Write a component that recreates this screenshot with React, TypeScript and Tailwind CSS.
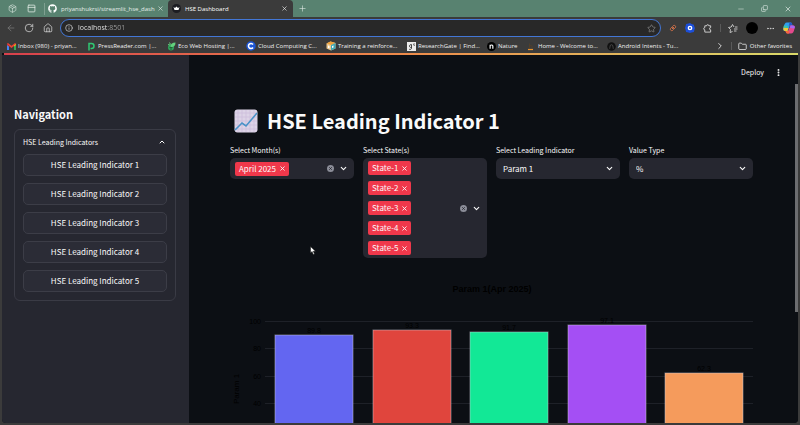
import { useState } from "react";
import type { ReactNode } from "react";
import {
  ArrowLeft,
  ChevronDown,
  ChevronRight,
  ChevronUp,
  Copy,
  EllipsisVertical,
  Ellipsis,
  Folder,
  House,
  Info,
  Minus,
  Package,
  PanelTop,
  Plus,
  RotateCw,
  Star,
  X,
} from "lucide-react";
import { FaGithub } from "react-icons/fa";

function GmailIcon() {
  return (
    <svg viewBox="0 0 18 14" className="w-[9px] h-[7px] shrink-0" aria-hidden="true">
      <path d="M0 2v12h4V5z" fill="#4285f4" />
      <path d="M18 2v12h-4V5z" fill="#34a853" />
      <path d="M0 3V1.500l2-1.500 7 5.500L16 0l2 1.500V3l-9 7z" fill="#ea4335" />
      <path d="M0 2l4 3v2L0 4z" fill="#c5221f" />
      <path d="M18 2l-4 3v2l4-3z" fill="#fbbc04" />
    </svg>
  );
}

function PressReaderIcon() {
  return (
    <svg viewBox="0 0 16 18" className="w-2 h-[9px] shrink-0" aria-hidden="true">
      <path d="M4 17V3h5a4.500 4.500 0 0 1 0 10H7" fill="none" stroke="#2fc873" strokeWidth="3" />
    </svg>
  );
}

function EcoIcon() {
  return (
    <svg viewBox="0 0 18 18" className="w-[9px] h-[9px] shrink-0" aria-hidden="true">
      <circle cx="8" cy="11" r="6" fill="#2fa45a" />
      <path d="M7 9c0-5 4-8 10-8 0 6-3 9-8 9z" fill="#63d07d" />
      <path d="M2 5l4 1M5 1l2 4" stroke="#63d07d" strokeWidth="2" />
      <path d="M5 11h6M6 14h4" stroke="#21462d" strokeWidth="1.500" />
    </svg>
  );
}

function CloudCIcon() {
  return (
    <svg viewBox="0 0 20 20" className="w-[10px] h-[10px] shrink-0" aria-hidden="true">
      <circle cx="10" cy="10" r="9.500" fill="#1c56d6" />
      <path d="M14 7a5 5 0 1 0 0 6" fill="none" stroke="#fff" strokeWidth="3.200" />
    </svg>
  );
}

function CubeIcon() {
  return (
    <svg viewBox="0 0 20 20" className="w-[10px] h-[10px] shrink-0" aria-hidden="true">
      <path d="M1 5l8-4 10 3v11l-9 4-9-4z" fill="#e9c48b" />
      <path d="M1 5l8-4 10 3-9 4z" fill="#f0a13a" />
      <path d="M10 8l9-4v11l-9 4z" fill="#3fa7b5" />
      <path d="M4 9l3 1v5l-3-1zM12 10l3-1v4l-3 1z" fill="#fff" />
    </svg>
  );
}

function ResearchGateIcon() {
  return (
    <svg viewBox="0 0 18 18" className="w-[9px] h-[9px] shrink-0" aria-hidden="true">
      <rect width="18" height="18" fill="#ececec" />
      <path d="M10 6a3 3 0 1 0-1 5M9 6v7a3 3 0 0 1-5 1" fill="none" stroke="#333" strokeWidth="1.800" />
      <path d="M15 3a2 2 0 1 0 0 4V5" fill="none" stroke="#333" strokeWidth="1.300" />
    </svg>
  );
}

function NatureIcon() {
  return (
    <svg viewBox="0 0 20 20" className="w-[9px] h-[9px] shrink-0" aria-hidden="true">
      <circle cx="10" cy="10" r="10" fill="#000" />
      <path d="M7 15V6M7 8c2-2 6-2 6 1v6" fill="none" stroke="#fff" strokeWidth="2.600" />
    </svg>
  );
}

function HomeSiteIcon() {
  return (
    <svg viewBox="0 0 16 18" className="w-2 h-[9px] shrink-0" aria-hidden="true">
      <path d="M5 3v9M5 8c2-2 5-1 5 1v3" fill="none" stroke="#5a4326" strokeWidth="1.500" />
      <path d="M2 15h10" stroke="#e8912b" strokeWidth="2.500" />
    </svg>
  );
}

function AndroidSiteIcon() {
  return (
    <svg viewBox="0 0 20 20" className="w-[9px] h-[9px] shrink-0" aria-hidden="true">
      <circle cx="10" cy="10" r="9.500" fill="#111" />
      <path d="M6 15c0-3 1-4 1-6a3 3 0 0 1 6 0c0 2 1 3 1 6" fill="none" stroke="#4a4a4a" strokeWidth="2" />
    </svg>
  );
}

function CrownIcon() {
  return (
    <svg viewBox="0 0 18 18" className="w-[9px] h-[9px] shrink-0" aria-hidden="true">
      <circle cx="9" cy="9" r="9" fill="#1c1c22" />
      <path d="M3 6l3 2 3-3 3 3 3-2-2 6H5z" fill="#fff" />
    </svg>
  );
}

function CopilotIcon() {
  return (
    <svg viewBox="0 0 24 24" className="w-3 h-3 shrink-0" aria-hidden="true">
      <path d="M8 1h7c3 0 3 3 4 6h-5L9 18H4c-4 0-4-4-3-7C2 5 4 1 8 1z" fill="#2f9df0" />
      <path d="M13 1h2c3 0 3 3 4 6h-5c-2 0-3 2-3 4z" fill="#2456c8" />
      <path d="M1 11c-1 4 0 7 3 7h5l2-6z" fill="#f0c83a" />
      <path d="M1 11l1-4 8 1-1 4z" fill="#3ac7a0" />
      <path d="M16 23H9c-3 0-3-2-4-5h5l5-11h5c4 0 4 3 3 6-1 6-3 10-7 10z" fill="#e5498c" />
      <path d="M15 7h5c4 0 4 3 3 6l-9-1z" fill="#a865f0" />
      <path d="M5 18h5c2 0 3-2 3-4l-1 9H9c-3 0-3-2-4-5z" fill="#f46a3a" />
    </svg>
  );
}

function ExtensionsIcon() {
  return (
    <svg viewBox="0 0 20 20" className="w-[9px] h-[9px]" fill="none" stroke="currentColor" strokeWidth="2" aria-hidden="true">
      <path d="M4 4h4a2.500 2.500 0 0 1 5 0h4v4a2.500 2.500 0 0 0 0 5v5H4v-5a2.500 2.500 0 0 1 0-5z" />
    </svg>
  );
}

function ClearIcon() {
  return (
    <svg viewBox="0 0 14 14" className="w-[7px] h-[7px]" aria-hidden="true">
      <circle cx="7" cy="7" r="7" fill="#8b8d98" />
      <path d="M4.500 4.500l5 5M9.500 4.500l-5 5" stroke="#262730" strokeWidth="1.800" />
    </svg>
  );
}

function ChartEmoji() {
  return (
    <svg viewBox="0 0 24 24" className="w-6 h-6 shrink-0" role="img" aria-label="Chart increasing">
      <rect x="0.500" y="0.500" width="23" height="23" rx="3" fill="#dcd3e6" />
      <path
        d="M4 1v22M8 1v22M12 1v22M16 1v22M20 1v22M1 4h22M1 8h22M1 12h22M1 16h22M1 20h22"
        stroke="#cdbedc"
        strokeWidth="0.800"
      />
      <path d="M1 21l7-7 4 3L23 4" fill="none" stroke="#4a92c8" strokeWidth="1.600" />
    </svg>
  );
}

type Bookmark = { label: string; icon: ReactNode; width: string };

const bookmarks: Bookmark[] = [
  { label: "Inbox (980) - priyan...", icon: <GmailIcon />, width: "w-20" },
  { label: "PressReader.com |...", icon: <PressReaderIcon />, width: "w-20" },
  { label: "Eco Web Hosting |...", icon: <EcoIcon />, width: "w-20" },
  { label: "Cloud Computing C...", icon: <CloudCIcon />, width: "w-20" },
  { label: "Training a reinforce...", icon: <CubeIcon />, width: "w-20" },
  { label: "ResearchGate | Find...", icon: <ResearchGateIcon />, width: "w-20" },
  { label: "Nature", icon: <NatureIcon />, width: "w-10" },
  { label: "Home - Welcome to...", icon: <HomeSiteIcon />, width: "w-20" },
  { label: "Android Intents - Tu...", icon: <AndroidSiteIcon />, width: "w-20" },
];

function TabStrip() {
  return (
    <div className="flex h-[17px] shrink-0 items-stretch bg-[#588270] text-[#e6efea]">
      <div className="flex w-[168px] items-center pl-2">
        <button aria-label="Workspaces"><Package size={9} strokeWidth={1.5} /></button>
        <button aria-label="Tab actions" className="ml-[10px]"><PanelTop size={9} strokeWidth={2} /></button>
        <span className="ml-2 h-3 w-px bg-[#7fa091]" />
        <FaGithub size={9} className="ml-[3px] shrink-0 text-white" />
        <span className="ml-[4px] flex-1 whitespace-nowrap">priyanshukrsi/streamlit_hse_dash</span>
        <button aria-label="Close tab" className="mr-1"><X size={7} /></button>
      </div>
      <div className="flex w-[125px] items-center rounded-t bg-[#3b3b3b] pl-1 pr-[5px] text-white">
        <CrownIcon />
        <span className="ml-1 flex-1">HSE Dashboard</span>
        <button aria-label="Close tab"><X size={7} /></button>
      </div>
      <button aria-label="New tab" className="ml-[5px]"><Plus size={9} strokeWidth={1.5} /></button>
      <div className="ml-auto flex items-center gap-4 pr-2">
        <button aria-label="Minimize"><Minus size={8} strokeWidth={1.5} /></button>
        <button aria-label="Restore"><Copy size={7} strokeWidth={2} className="-scale-x-100 rotate-180" /></button>
        <button aria-label="Close window"><X size={8} strokeWidth={2} /></button>
      </div>
    </div>
  );
}

function Toolbar() {
  const [url, setUrl] = useState("localhost:8501");
  return (
    <div className="flex h-[22px] shrink-0 items-center pl-[6px] pr-[5px] text-[#d8d8d8]">
      <button aria-label="Back" className="text-[#7a7a7a]"><ArrowLeft size={10} strokeWidth={1.800} /></button>
      <button aria-label="Refresh" className="ml-2"><RotateCw size={10} strokeWidth={1.800} /></button>
      <button aria-label="Home" className="ml-[9px]"><House size={10} strokeWidth={1.800} /></button>
      <label className="ml-[7px] flex h-[18px] flex-1 items-center rounded-full border border-[#4377d6] bg-[#282828] px-1">
        <Info size={8} strokeWidth={2} />
        <input
          aria-label="Address"
          value={url}
          onChange={(e) => setUrl(e.target.value)}
          className="ml-[5px] min-w-0 flex-1 bg-[linear-gradient(90deg,#f2f2f2_29px,#a0a0a0_29px)] bg-clip-text text-[7px] text-transparent outline-none"
        />
        <Star size={9} strokeWidth={1.500} className="text-[#a0a0a0]" />
      </label>
      <div className="flex w-[134px] items-center justify-between pl-2">
        <svg viewBox="0 0 16 16" className="h-2 w-2" aria-hidden="true">
          <path d="M9 3a3 3 0 0 1 4 4l-2 2-4-4zM7 13a3 3 0 0 1-4-4l2-2 4 4zM5 7l6 2" fill="none" stroke="#d0714a" strokeWidth="2" />
        </svg>
        <svg viewBox="0 0 18 18" className="h-[10px] w-[10px]" aria-hidden="true">
          <path d="M9 0l3 2 4 1 1 4 1 2-1 3-1 4-4 1-3 1-3-1-4-1-1-4-1-3 1-3 1-4 4-1z" fill="#1d4fd8" />
          <circle cx="9" cy="9" r="3" fill="#1d4fd8" stroke="#fff" strokeWidth="2.500" />
        </svg>
        <button aria-label="Extensions"><ExtensionsIcon /></button>
        <span className="h-2 w-px bg-[#5a5a5a]" />
        <button aria-label="Favorites">
          <svg viewBox="0 0 20 18" className="h-[9px] w-[10px]" fill="none" stroke="currentColor" strokeWidth="1.700">
            <path d="M12 6L9 1 6.500 6 1 7l4 4-1 6 5-2M14 6h5M12 10h7M12 14h5" />
          </svg>
        </button>
        <button aria-label="Profile" className="h-3 w-3 rounded-full bg-black" />
        <button aria-label="Settings and more"><Ellipsis size={9} /></button>
        <button aria-label="Copilot"><CopilotIcon /></button>
      </div>
    </div>
  );
}

function BookmarksBar() {
  return (
    <nav aria-label="Favorites bar" className="flex h-[14px] shrink-0 items-center pl-[6px] pr-2 text-[#f0f0f0]">
      {bookmarks.map((b) => (
        <a key={b.label} href="#" className={`flex shrink-0 items-center gap-[2px] whitespace-nowrap ${b.width}`}>
          <span className="flex w-[10px] shrink-0 justify-center">{b.icon}</span>
          {b.label}
        </a>
      ))}
      <div className="ml-auto flex items-center">
        <button aria-label="More favorites"><ChevronRight size={10} /></button>
        <span className="mx-[6px] h-2 w-px bg-[#5a5a5a]" />
        <a href="#" className="flex items-center gap-[3px] whitespace-nowrap"><Folder size={9} strokeWidth={2} />Other favorites</a>
      </div>
    </nav>
  );
}

function Sidebar() {
  const [open, setOpen] = useState(true);
  return (
    <aside className="w-[187px] shrink-0 bg-[#262730] pl-3 pr-[13px] pt-[50px]">
      <h2 className="text-[11px] font-bold leading-[18px]">Navigation</h2>
      <section className="mt-[6px] rounded-md border border-[#3a3b45] px-2 pb-2">
        <button
          onClick={() => setOpen(!open)}
          aria-expanded={open}
          className="flex h-6 w-full items-center justify-between text-[7px]"
        >
          HSE Leading Indicators
          <ChevronUp size={8} strokeWidth={3} className="mr-[1px]" />
        </button>
        {open && (
          <div className="flex flex-col gap-[7px]">
            {[1, 2, 3, 4, 5].map((n) => (
              <button key={n} className="h-[22px] rounded-[5px] border border-[#3c3d47] bg-[#2b2c36] text-[8px] leading-[12px]">
                HSE Leading Indicator {n}
              </button>
            ))}
          </div>
        )}
      </section>
    </aside>
  );
}

function MultiSelect({ label, initial }: { label: string; initial: string[] }) {
  const [values, setValues] = useState(initial);
  return (
    <fieldset className="min-w-0">
      <legend className="text-[7px] leading-[10px]">{label}</legend>
      <div className="mt-[3px] flex items-center rounded-[5px] bg-[#262730] pl-[5px] pr-[6px]">
        <div className="flex min-h-[21px] flex-1 flex-col items-start justify-center gap-[6px] py-[3px]">
          {values.map((v) => (
            <span key={v} className="flex h-[14px] items-center gap-[3px] rounded-[2px] bg-[#f0384b] pl-1 pr-[3px] text-[8px] leading-[14px]">
              {v}
              <button aria-label={`Remove ${v}`} onClick={() => setValues(values.filter((o) => o !== v))}>
                <X size={7} strokeWidth={3} />
              </button>
            </span>
          ))}
        </div>
        <button aria-label="Clear all" onClick={() => setValues([])}>
          <ClearIcon />
        </button>
        <button aria-label={`Open ${label}`} className="ml-[5px]">
          <ChevronDown size={9} strokeWidth={3} />
        </button>
      </div>
    </fieldset>
  );
}

function SelectBox({ label, options }: { label: string; options: string[] }) {
  return (
    <label className="block min-w-0">
      <span className="block text-[7px] leading-[10px]">{label}</span>
      <span className="mt-[3px] grid items-center">
        <select className="col-start-1 row-start-1 h-[21px] w-full appearance-none rounded-[5px] bg-[#262730] px-[7px] text-[8px] leading-[12px] outline-none">
          {options.map((o) => (
            <option key={o}>{o}</option>
          ))}
        </select>
        <ChevronDown size={9} strokeWidth={3} className="pointer-events-none col-start-1 row-start-1 mr-[6px] justify-self-end" />
      </span>
    </label>
  );
}

const bars = [
  { value: "89.8", top: 66, color: "#6366f1" },
  { value: "93.3", top: 61, color: "#e0453d" },
  { value: "91.7", top: 63, color: "#12e896" },
  { value: "97.1", top: 56, color: "#a44ff4" },
  { value: "62.3", top: 104, color: "#f59b5c" },
];

const ticks = [
  { label: "100", y: 52 },
  { label: "80", y: 79 },
  { label: "60", y: 107 },
  { label: "40", y: 134 },
];

function BarChart() {
  return (
    <svg
      viewBox="0 0 523 200"
      className="mt-[12px] block w-full font-['Liberation_Sans',Arial,sans-serif]"
      role="img"
      aria-label="Param 1 by state"
    >
      <text x="262" y="22" textAnchor="middle" fontSize="9" fontWeight="bold" fill="#000">Param 1(Apr 2025)</text>
      {ticks.map((t) => (
        <g key={t.label}>
          <rect x="35" y={t.y - 1} width="488" height="1" fill="#1e2128" />
          <text x="31" y={t.y + 2} textAnchor="end" fontSize="7" fill="#000">{t.label}</text>
        </g>
      ))}
      <text transform="translate(9 119) rotate(-90)" textAnchor="middle" y="0" fontSize="8" fill="#000">Param 1</text>
      {bars.map((b, i) => {
        const x = 45 + Math.round(i * 97.6);
        return (
          <g key={b.value}>
            <rect x={x} y={b.top - 1} width="78" height={190 - b.top} fill={b.color} stroke="#c9c9d6" strokeOpacity="0.500" strokeWidth="1" />
            <text x={x + 39} y={b.top - 3} textAnchor="middle" fontSize="7" fill="#000">{b.value}</text>
          </g>
        );
      })}
    </svg>
  );
}

function Dashboard() {
  return (
    <main className="flex min-w-0 flex-1 flex-col overflow-hidden bg-[#0c0f14]">
      <header className="flex h-[34px] shrink-0 items-center justify-end gap-[10px] pr-[15px] text-[7px]">
        <button>Deploy</button>
        <button aria-label="Main menu"><EllipsisVertical size={9} strokeWidth={3} /></button>
      </header>
      <div className="pl-[41px] pr-[45px]">
        <h1 className="mt-[16px] flex h-8 items-center gap-[9px] pl-1 text-[20px] font-bold leading-8">
          <ChartEmoji />
          HSE Leading Indicator 1
        </h1>
        <div className="mt-[8px] grid grid-cols-4 items-start gap-[9px]">
          <MultiSelect label="Select Month(s)" initial={["April 2025"]} />
          <MultiSelect label="Select State(s)" initial={["State-1", "State-2", "State-3", "State-4", "State-5"]} />
          <SelectBox label="Select Leading Indicator" options={["Param 1", "Param 2"]} />
          <SelectBox label="Value Type" options={["%", "Count"]} />
        </div>
        <BarChart />
      </div>
    </main>
  );
}

export default function App() {
  return (
    <div className="relative flex h-screen flex-col overflow-hidden bg-[#3b3b3b] pb-[2px] font-['Open_Sans','Noto_Sans',sans-serif] text-[6px] leading-[10px]">
      <TabStrip />
      <Toolbar />
      <BookmarksBar />
      <div className="mx-[2px] flex min-h-0 flex-1 flex-col overflow-hidden rounded-b-[4px] bg-[#0c0f14] font-['Noto_Sans_CJK_SC',sans-serif] text-[#fafafa]">
        <div className="ml-[2px] h-[2px] shrink-0 bg-[linear-gradient(90deg,#d8404c,#ee8a4a_50%,#d9d96a)]" />
        <div className="relative flex min-h-0 flex-1">
          <Sidebar />
          <Dashboard />
          <span className="absolute right-0 top-[29px] h-[228px] w-[3px] bg-[#6c6d70]" />
        </div>
      </div>
      <svg viewBox="0 0 12 18" className="pointer-events-none absolute left-[310px] top-[246px] h-[9px] w-[6px]" aria-hidden="true">
        <path d="M1 1v13l3-3 2.500 6 2.500-1-2.500-5.500H11z" fill="#fff" stroke="#111" />
      </svg>
    </div>
  );
}
